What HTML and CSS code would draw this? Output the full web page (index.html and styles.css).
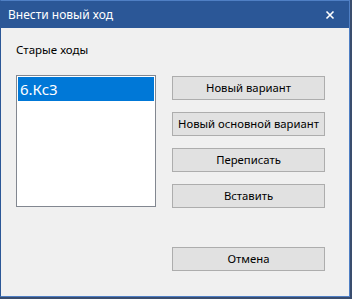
FILE: index.html
```html
<!DOCTYPE html>
<html>
<head>
<meta charset="utf-8">
<link rel="stylesheet" href="styles.css">
</head>
<body>
<div class="window">
  <div class="titlebar">
    <span class="title">Внести новый ход</span>
    <svg class="close" width="10" height="10" viewBox="0 0 10 10"><path d="M1.5 1.5 L8.5 8.5 M8.5 1.5 L1.5 8.5" stroke="#fff" stroke-width="1.6" fill="none"/></svg>
  </div>
  <div class="content">
    <div class="label">Старые ходы</div>
    <div class="main">
      <div class="list">
        <div class="item selected">6.Кс3</div>
      </div>
      <div class="buttons">
        <div class="btn">Новый вариант</div>
        <div class="btn">Новый основной вариант</div>
        <div class="btn">Переписать</div>
        <div class="btn">Вставить</div>
        <div class="btn cancel">Отмена</div>
      </div>
    </div>
  </div>
</div>
</body>
</html>
```
FILE: styles.css
```css
html, body {
  margin: 0;
  padding: 0;
}
body {
  width: 352px;
  height: 299px;
  background: #3a4d6e;
  font-family: "Noto Sans", "Open Sans", sans-serif;
  overflow: hidden;
}
.window {
  width: 350px;
  height: 297px;
  box-sizing: border-box;
  border: 1px solid #4f7fc4;
  border-left-color: #2b5797;
  background: #f0f0f0;
  display: flex;
  flex-direction: column;
}
.titlebar {
  height: 27px;
  background: #2b5797;
  display: flex;
  align-items: center;
  justify-content: space-between;
  padding: 0 14px 0 7px;
  color: #fff;
}
.title {
  font-size: 12px;
  line-height: 16px;
}
.close {
  display: block;
}
.content {
  padding: 14px 0 0 15px;
}
.label {
  font-size: 11.5px;
  line-height: 16px;
  color: #000;
}
.main {
  display: flex;
  margin-top: 17px;
}
.list {
  width: 140px;
  height: 132px;
  box-sizing: border-box;
  border: 1px solid #828790;
  background: #fff;
  padding: 1px;
}
.item {
  height: 24px;
  line-height: 24px;
  font-size: 15px;
  padding-left: 2px;
}
.selected {
  background: #0078d7;
  color: #fff;
}
.buttons {
  margin-left: 16px;
  padding-top: 1px;
  display: flex;
  flex-direction: column;
  gap: 12px;
}
.btn {
  width: 153px;
  height: 24px;
  box-sizing: border-box;
  border: 1px solid #adadad;
  background: #e1e1e1;
  font-size: 11.3px;
  line-height: 22px;
  text-align: center;
  color: #000;
  white-space: nowrap;
}
.cancel {
  margin-top: 27px;
}
```
